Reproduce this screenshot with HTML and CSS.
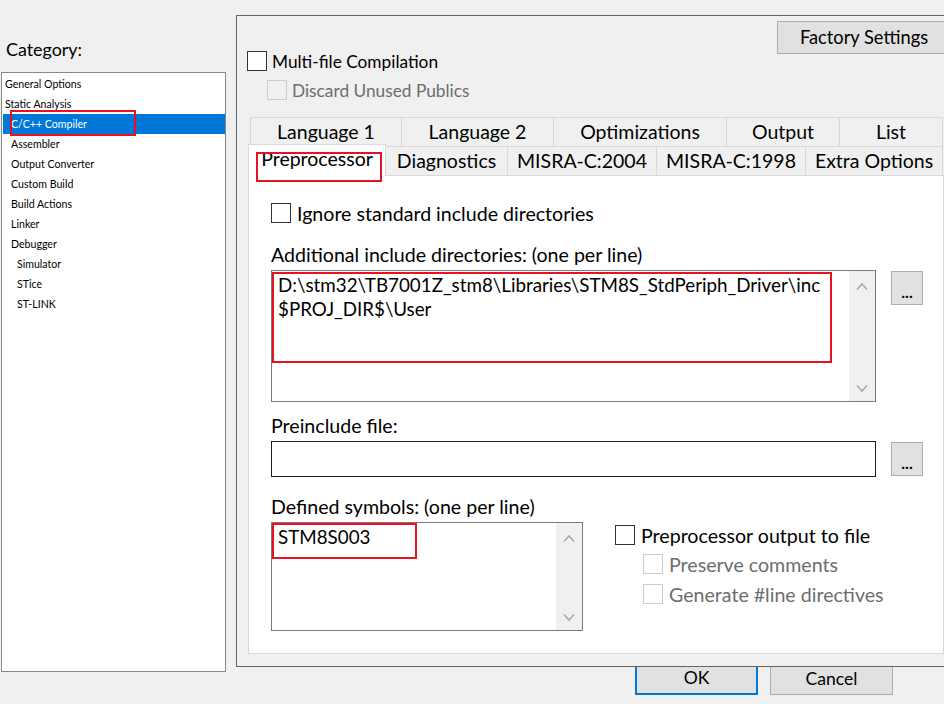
FILE: index.html
```html
<!DOCTYPE html>
<html>
<head>
<meta charset="utf-8">
<link rel="stylesheet" href="styles.css">
</head>
<body>
<div class="dialog">
  <div class="left">
    <div class="cat-label">Category:</div>
    <div class="listbox">
      <div class="item l0">General Options</div>
      <div class="item l0">Static Analysis</div>
      <div class="item l1 selected">C/C++ Compiler<span class="mark mark-cat"></span></div>
      <div class="item l1">Assembler</div>
      <div class="item l1">Output Converter</div>
      <div class="item l1">Custom Build</div>
      <div class="item l1">Build Actions</div>
      <div class="item l1">Linker</div>
      <div class="item l1">Debugger</div>
      <div class="item l2">Simulator</div>
      <div class="item l2">STice</div>
      <div class="item l2">ST-LINK</div>
    </div>
  </div>
  <div class="right">
    <div class="frame">
      <div class="fs-row"><div class="btn factory">Factory Settings</div></div>
      <div class="cb-row top-cb"><span class="cb"></span><span class="cb-text">Multi-file Compilation</span></div>
      <div class="cb-row top-cb sub disabled"><span class="cb"></span><span class="cb-text">Discard Unused Publics</span></div>
      <div class="tabs">
        <div class="tabrow">
          <div class="tab w152">Language 1</div>
          <div class="tab w153">Language 2</div>
          <div class="tab w174">Optimizations</div>
          <div class="tab w114">Output</div>
          <div class="tab w104">List</div>
        </div>
        <div class="tabrow">
          <div class="tab selected">Preprocessor<span class="mark mark-tab"></span></div>
          <div class="tab w123">Diagnostics</div>
          <div class="tab w150">MISRA-C:2004</div>
          <div class="tab w150">MISRA-C:1998</div>
          <div class="tab w138">Extra Options</div>
        </div>
      </div>
      <div class="panel">
        <div class="cb-row p-cb"><span class="cb"></span><span class="cb-text">Ignore standard include directories</span></div>
        <div class="p-label inc-label">Additional include directories: (one per line)</div>
        <div class="field-row">
          <div class="ta ta-inc">
            <div class="ta-text">D:\stm32\TB7001Z_stm8\Libraries\STM8S_StdPeriph_Driver\inc<br>$PROJ_DIR$\User</div>
            <div class="sb">
              <svg width="12" height="9" viewBox="0 0 12 9"><polyline points="1,7.5 6,2 11,7.5" fill="none" stroke="#a9a9a9" stroke-width="1.6"/></svg>
              <svg width="12" height="9" viewBox="0 0 12 9"><polyline points="1,1.5 6,7 11,1.5" fill="none" stroke="#a9a9a9" stroke-width="1.6"/></svg>
            </div>
            <span class="mark mark-inc"></span>
          </div>
          <div class="btn dots">...</div>
        </div>
        <div class="p-label pre-label">Preinclude file:</div>
        <div class="field-row">
          <div class="input"></div>
          <div class="btn dots dots2">...</div>
        </div>
        <div class="lower">
          <div class="def-col">
            <div class="p-label def-label">Defined symbols: (one per line)</div>
            <div class="ta ta-def">
              <div class="ta-text">STM8S003</div>
              <div class="sb">
                <svg width="12" height="9" viewBox="0 0 12 9"><polyline points="1,7.5 6,2 11,7.5" fill="none" stroke="#a9a9a9" stroke-width="1.6"/></svg>
                <svg width="12" height="9" viewBox="0 0 12 9"><polyline points="1,1.5 6,7 11,1.5" fill="none" stroke="#a9a9a9" stroke-width="1.6"/></svg>
              </div>
              <span class="mark mark-def"></span>
            </div>
          </div>
          <div class="opt-col">
            <div class="cb-row"><span class="cb"></span><span class="cb-text">Preprocessor output to file</span></div>
            <div class="cb-row sub disabled o1"><span class="cb"></span><span class="cb-text">Preserve comments</span></div>
            <div class="cb-row sub disabled o2"><span class="cb"></span><span class="cb-text">Generate #line directives</span></div>
          </div>
        </div>
      </div>
    </div>
    <div class="footer">
      <div class="btn fbtn ok">OK</div>
      <div class="btn fbtn">Cancel</div>
    </div>
  </div>
</div>
</body>
</html>
```

FILE: styles.css
```css
html, body {
  margin: 0;
  padding: 0;
}
body {
  width: 944px;
  height: 704px;
  overflow: hidden;
  background: #f0f0f0;
  color: #000;
  font-family: "Lato", "Noto Sans", sans-serif;
}
.dialog {
  display: flex;
  align-items: flex-start;
}
.left {
  flex: none;
  width: 227px;
}
.cat-label {
  height: 72px;
  box-sizing: border-box;
  padding: 38px 0 0 6px;
  font-size: 17.9px;
  line-height: 22px;
}
.listbox {
  margin-left: 1px;
  width: 225px;
  height: 600px;
  box-sizing: border-box;
  border: 1px solid #828790;
  background: #fff;
  padding-top: 1px;
}
.item {
  position: relative;
  height: 20px;
  line-height: 20px;
  margin-left: 1px;
  font-size: 10.6px;
  white-space: nowrap;
}
.item.l0 { padding-left: 2px; }
.item.l1 { padding-left: 8px; }
.item.l2 { padding-left: 14px; }
.item.selected {
  background: #0078d7;
  color: #fff;
}
.mark {
  position: absolute;
  border: 2px solid #e81123;
  box-sizing: border-box;
  pointer-events: none;
  z-index: 5;
}
.mark-cat { left: 7px; top: -4px; width: 126px; height: 26px; }
.right {
  flex: none;
  width: 720px;
  margin-left: 9px;
}
.frame {
  margin-top: 15px;
  height: 652px;
  box-sizing: border-box;
  border: 1px solid #646464;
}
.fs-row {
  height: 35px;
  box-sizing: border-box;
  padding: 5px 0 0 540px;
}
.btn {
  box-sizing: border-box;
  background: #e1e1e1;
  border: 1px solid #adadad;
  display: flex;
  align-items: center;
  justify-content: center;
  white-space: nowrap;
}
.factory {
  width: 174px;
  height: 33px;
  font-size: 18.3px;
  padding-bottom: 1px;
}
.cb-row {
  display: flex;
  align-items: center;
  height: 20px;
  white-space: nowrap;
}
.cb {
  flex: none;
  width: 20px;
  height: 20px;
  box-sizing: border-box;
  border: 1px solid #333;
  background: #fff;
}
.disabled .cb {
  border-color: #cccccc;
  background: transparent;
}
.disabled .cb-text {
  color: #6d6d6d;
}
.cb-text {
  margin-left: 6px;
}
.top-cb {
  margin-left: 10px;
  font-size: 17.3px;
}
.top-cb .cb-text { margin-left: 5px; }
.top-cb.sub {
  margin-left: 30px;
  margin-top: 9px;
}
.tabs {
  margin: 17px 0 0 13px;
}
.tabrow {
  display: flex;
  align-items: flex-start;
  height: 30px;
}
.tabrow + .tabrow {
  margin-top: -1px;
}
.tab {
  box-sizing: border-box;
  height: 30px;
  border: 1px solid #d9d9d9;
  margin-left: -1px;
  background: #f0f0f0;
  display: flex;
  align-items: center;
  justify-content: center;
  font-size: 19.5px;
  white-space: nowrap;
  padding-bottom: 1px;
}
.tab:first-child { margin-left: 0; }
.tab.selected {
  position: relative;
  z-index: 3;
  top: -2px;
  margin-left: -2px;
  width: 138px;
  height: 32px;
  border-bottom: none;
  background: #fff;
  padding-bottom: 4px;
}
.mark-tab { left: 7px; top: 7px; width: 126px; height: 30px; }
.w104 { width: 104px; }
.w114 { width: 114px; }
.w123 { width: 123px; }
.w138 { width: 138px; }
.w150 { width: 150px; }
.w152 { width: 152px; }
.w153 { width: 153px; }
.w174 { width: 174px; }
.panel {
  margin: -1px 0 0 11px;
  width: 696px;
  height: 479px;
  box-sizing: border-box;
  border: 1px solid #d9d9d9;
  background: #fff;
  padding-left: 22px;
  font-size: 19.6px;
}
.panel .disabled .cb { background: #fff; }
.p-cb { margin-top: 27px; }
.p-label {
  height: 24px;
  line-height: 24px;
  white-space: nowrap;
}
.inc-label { margin-top: 20px; }
.field-row {
  display: flex;
  align-items: flex-start;
  margin-top: 3px;
}
.ta {
  position: relative;
  display: flex;
  box-sizing: border-box;
  border: 1px solid #7a7a7a;
  background: #fff;
}
.ta-inc { width: 605px; height: 132px; }
.ta-text {
  flex: 1;
  padding: 2px 0 0 6px;
  line-height: 24px;
  font-size: 18.8px;
  white-space: nowrap;
  overflow: hidden;
}
.sb {
  flex: none;
  width: 26px;
  background: #f0f0f0;
  display: flex;
  flex-direction: column;
  align-items: center;
  justify-content: space-between;
  padding: 11px 0 8px;
  box-sizing: border-box;
}
.sb svg { display: block; }
.mark-inc { left: 0; top: 1px; width: 560px; height: 91px; }
.dots {
  margin: 1px 0 0 15px;
  width: 32px;
  height: 34px;
  font-size: 16px;
  font-weight: bold;
  padding-top: 6px;
}
.pre-label { margin-top: 12px; }
.input {
  width: 605px;
  height: 36px;
  box-sizing: border-box;
  border: 1px solid #1e1e1e;
  background: #fff;
}
.lower {
  display: flex;
  align-items: flex-start;
  margin-top: 18px;
}
.def-col { width: 312px; }
.ta-def {
  margin-top: 3px;
  width: 312px;
  height: 109px;
}
.mark-def { left: 0; top: 0; width: 145px; height: 36px; }
.opt-col {
  margin-left: 32px;
  padding-top: 30px;
}
.opt-col .sub { margin-left: 28px; }
.o1 { margin-top: 9px; }
.o2 { margin-top: 10px; }
.footer {
  display: flex;
  gap: 12px;
  padding-left: 399px;
}
.fbtn {
  width: 123px;
  height: 28px;
  border-top: none;
  font-size: 17.6px;
  padding-bottom: 5px;
}
.fbtn.ok {
  border: 2px solid #0078d7;
  border-top: none;
}
```
